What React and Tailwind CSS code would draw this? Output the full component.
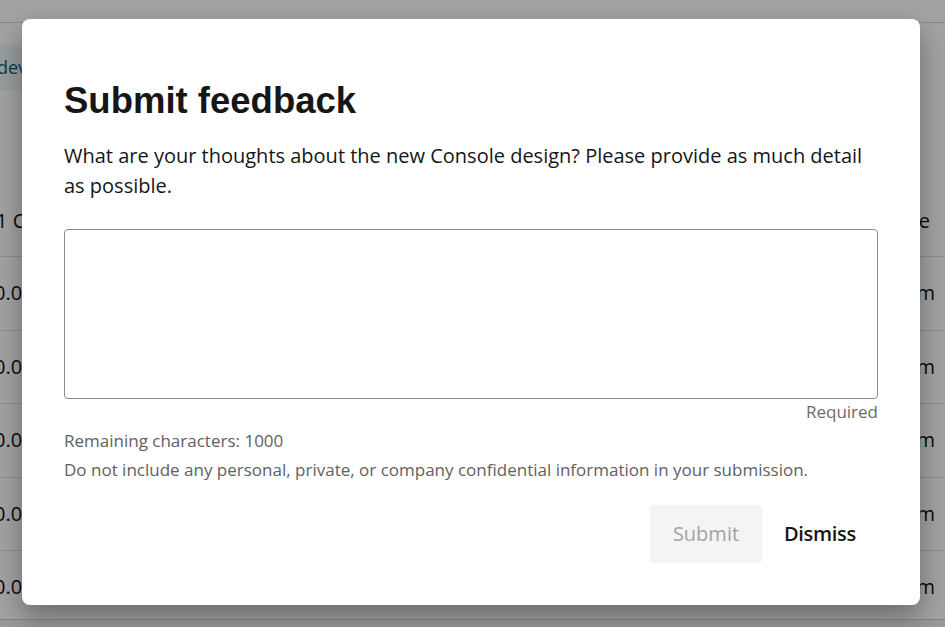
import { useState } from 'react'

const rows = [0, 1, 2, 3, 4]

const FeedbackModal = () => {
  const [text, setText] = useState('')
  const remaining = 1000 - text.length

  return (
    <div className="absolute left-[22px] top-[19px] w-[898px] h-[586px] bg-white rounded-lg shadow-[0_12px_28px_rgba(0,0,0,0.35)] px-[42px] pt-[62px]">
      <h1 className="font-['Liberation_Sans',Arial,sans-serif] font-bold text-[36.5px] leading-[40px] text-[#161616]">
        Submit feedback
      </h1>
      <p className="mt-[20px] text-[20px] leading-[30px] text-[#161616]">
        What are your thoughts about the new Console design? Please provide as much detail as possible.
      </p>
      <textarea
        value={text}
        onChange={(e) => setText(e.target.value.slice(0, 1000))}
        className="mt-[28px] block w-full h-[170px] border border-[#8a8a8a] rounded-[4px] resize-none outline-none p-2 text-[16px]"
      />
      <div className="text-right text-[17px] leading-[26px] text-[#6b6b6b]">Required</div>
      <div className="mt-[1px] text-[17px] leading-[29px] text-[#616161]">
        <div>Remaining characters: {remaining}</div>
        <div>Do not include any personal, private, or company confidential information in your submission.</div>
      </div>
      <div className="mt-[21px] flex justify-end items-center gap-[22px] pr-[22px]">
        <button disabled className="w-[112px] h-[58px] rounded-[4px] bg-[#f4f4f4] text-[#a3a3a3] text-[20px]">
          Submit
        </button>
        <button className="text-[20px] font-semibold tracking-[-0.3px] text-[#161616]">Dismiss</button>
      </div>
    </div>
  )
}

const App = () => {
  return (
    <div className="relative w-[945px] h-[627px] overflow-hidden bg-white font-['Open_Sans','Noto_Sans',sans-serif] text-[#111]">
      {/* page behind the dialog */}
      <div className="h-[23px] border-b border-[#d6d6d6]" />
      <div className="mt-[22px] h-[45px] w-[36px] bg-[#eef6f8] flex items-center">
        <span className="-ml-[3px] text-[18px] text-[#0b5f7a]">dev</span>
      </div>
      <div className="mt-[108px] flex justify-between items-center h-[59px] pb-[12px] border-b border-[#e0e0e0] text-[20px]">
        <span className="-ml-[4px]">1 C</span>
        <span className="pr-[15px]">e</span>
      </div>
      {rows.map((r) => (
        <div key={r} className="flex justify-between items-center h-[73.5px] border-b border-[#e0e0e0] text-[20px]">
          <span className="-ml-[6px]">0.0.</span>
          <span className="pr-[10px]">m</span>
        </div>
      ))}
      <div className="absolute left-0 right-0 bottom-0 h-[8px] border-t border-[#cfcfcf] bg-[#f0f0f0]" />

      {/* overlay */}
      <div className="absolute inset-0 bg-black/[0.36]" />
      <FeedbackModal />
    </div>
  )
}

export default App
